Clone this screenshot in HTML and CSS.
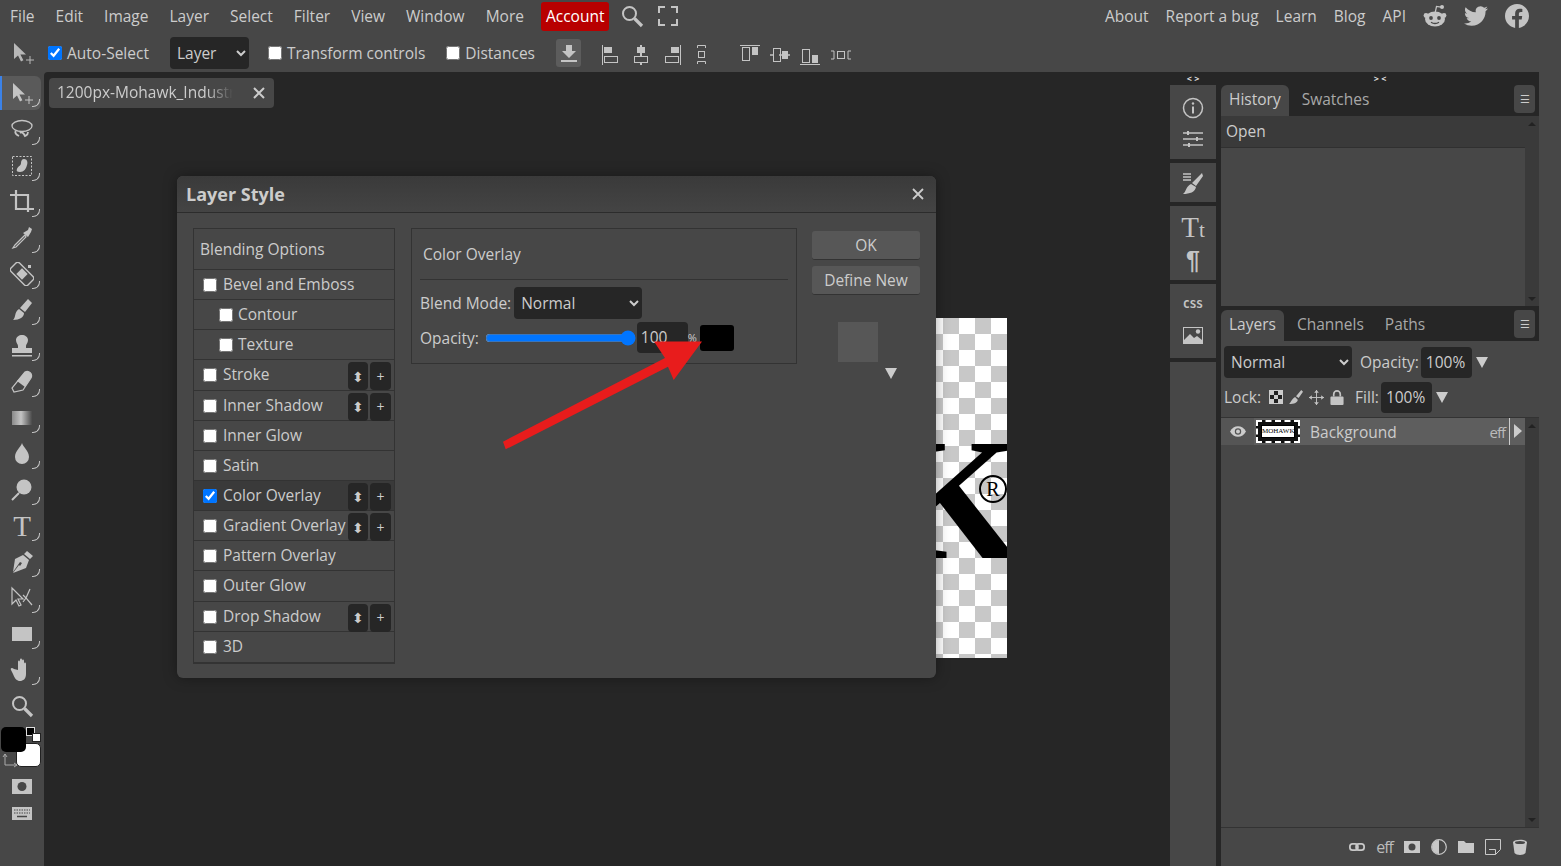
FILE: index.html
```html
<!DOCTYPE html>
<html lang="en">
<head>
    <meta charset="UTF-8">
    <meta name="viewport" content="width=device-width, initial-scale=1.0">
    <title>Photopea</title>
    <link rel="stylesheet" href="styles.css">
</head>
<body>
    <div class="menubar">
        <a>File</a><a>Edit</a><a>Image</a><a>Layer</a><a>Select</a><a>Filter</a><a>View</a><a>Window</a><a>More</a>
        <a class="account">Account</a>
        <svg class="ic search" viewBox="0 0 24 24" width="24" height="24"><circle cx="9.5" cy="9.5" r="6.5" fill="none" stroke="currentColor" stroke-width="2"/><path d="M14.5 14.5L22 22" stroke="currentColor" stroke-width="3.2"/></svg>
        <svg class="ic full" viewBox="0 0 20 20" width="20" height="20"><path d="M1 7V1h6M13 1h6v6M19 13v6h-6M7 19H1v-6" fill="none" stroke="currentColor" stroke-width="2"/></svg>
        <div class="menu-right">
            <a>About</a><a>Report a bug</a><a>Learn</a><a>Blog</a><a>API</a>
            <svg class="ic" viewBox="0 0 24 24" width="24" height="24"><ellipse cx="12" cy="15" rx="10" ry="7.5" fill="currentColor"/><circle cx="3" cy="11.5" r="2.4" fill="currentColor"/><circle cx="21" cy="11.5" r="2.4" fill="currentColor"/><circle cx="19" cy="3" r="2" fill="currentColor"/><path d="M12.3 8L13.5 2.5L18 3.2" fill="none" stroke="currentColor" stroke-width="1.2"/><circle cx="8" cy="14" r="1.9" fill="#474747"/><circle cx="16" cy="14" r="1.9" fill="#474747"/><path d="M8 18.2c2.4 1.6 5.6 1.6 8 0" fill="none" stroke="#474747" stroke-width="1.3"/></svg>
            <svg class="ic" viewBox="0 0 24 24" width="24" height="24"><path fill="currentColor" d="M23.953 4.57a10 10 0 01-2.825.775 4.958 4.958 0 002.163-2.723c-.951.555-2.005.959-3.127 1.184a4.92 4.92 0 00-8.384 4.482C7.69 8.095 4.067 6.13 1.64 3.162a4.822 4.822 0 00-.666 2.475c0 1.71.87 3.213 2.188 4.096a4.904 4.904 0 01-2.228-.616v.06a4.923 4.923 0 003.946 4.827 4.996 4.996 0 01-2.212.085 4.936 4.936 0 004.604 3.417 9.867 9.867 0 01-6.102 2.105c-.39 0-.779-.023-1.17-.067a13.995 13.995 0 007.557 2.209c9.053 0 13.998-7.496 13.998-13.985 0-.21 0-.42-.015-.63A9.935 9.935 0 0024 4.59z"/></svg>
            <svg class="ic" viewBox="0 0 24 24" width="24" height="24"><path fill="currentColor" d="M24 12.073c0-6.627-5.373-12-12-12s-12 5.373-12 12c0 5.99 4.388 10.954 10.125 11.854v-8.385H7.078v-3.47h3.047V9.43c0-3.007 1.792-4.669 4.533-4.669 1.312 0 2.686.235 2.686.235v2.953H15.83c-1.491 0-1.956.925-1.956 1.874v2.25h3.328l-.532 3.47h-2.796v8.385C19.612 23.027 24 18.062 24 12.073z"/></svg>
        </div>
    </div>

    <div class="optionsbar">
        <svg class="ic move" viewBox="0 0 24 24" width="24" height="24"><path d="M3 2v16l4-3.500 3 6 2.400-1.200-3-5.800H15z" fill="currentColor"/><path d="M15 19h8M19 15v8" stroke="currentColor" stroke-width="1"/></svg>
        <input type="checkbox" class="opt-auto" checked>
        <label class="opt-label">Auto-Select</label>
        <select class="dark-select opt-select"><option>Layer</option></select>
        <input type="checkbox" class="opt-tc">
        <label class="opt-label">Transform controls</label>
        <input type="checkbox" class="opt-dist">
        <label class="opt-label">Distances</label>
        <div class="apply-btn">
            <svg viewBox="0 0 20 20" width="20" height="20"><path d="M7 2h6v6h4l-7 7-7-7h4zM2 17h16v2H2z" fill="currentColor"/></svg>
        </div>
        <div class="align-group first">
            <svg viewBox="0 0 18 22" width="18" height="22"><path d="M2.500 1v20" stroke="currentColor"/><rect x="4" y="3" width="8" height="6" fill="currentColor"/><rect x="4.500" y="12.500" width="13" height="6" fill="none" stroke="currentColor"/></svg>
            <svg viewBox="0 0 18 22" width="18" height="22"><path d="M9 1v2M9 19v2M9 9v3" stroke="currentColor" stroke-width="2"/><rect x="5" y="3" width="8" height="6" fill="currentColor"/><rect x="2.500" y="12.500" width="13" height="6" fill="none" stroke="currentColor"/></svg>
            <svg viewBox="0 0 18 22" width="18" height="22"><path d="M16.500 1v20" stroke="currentColor"/><rect x="7" y="3" width="8" height="6" fill="currentColor"/><rect x="1.500" y="12.500" width="13" height="6" fill="none" stroke="currentColor"/></svg>
            <svg viewBox="0 0 12 22" width="12" height="22"><path d="M1.500 4V1.500h8V4M1.500 20v-2.500h8V20" fill="none" stroke="currentColor"/><rect x="2.500" y="7.500" width="6" height="6" fill="none" stroke="currentColor"/></svg>
        </div>
        <div class="align-group second">
            <svg viewBox="0 0 20 22" width="20" height="22"><path d="M0 1.500h20" stroke="currentColor"/><rect x="2.500" y="3.500" width="7" height="13" fill="none" stroke="currentColor"/><rect x="12" y="3" width="6" height="8" fill="currentColor"/></svg>
            <svg viewBox="0 0 20 22" width="20" height="22"><path d="M0 11h3M9 11h3M18 11h2" stroke="currentColor" stroke-width="1.500"/><rect x="3.500" y="4.500" width="7" height="13" fill="none" stroke="currentColor"/><rect x="12" y="7" width="6" height="8" fill="currentColor"/></svg>
            <svg viewBox="0 0 20 22" width="20" height="22"><path d="M0 20.500h20" stroke="currentColor"/><rect x="2.500" y="5.500" width="7" height="13" fill="none" stroke="currentColor"/><rect x="12" y="11" width="6" height="8" fill="currentColor"/></svg>
            <svg viewBox="0 0 22 22" width="22" height="22"><path d="M1 7h3v8H1M21 7h-3v8h3" fill="none" stroke="currentColor"/><rect x="7.500" y="7.500" width="7" height="7" fill="none" stroke="currentColor"/></svg>
        </div>
    </div>

    <div class="main">
        <div class="toolbar">
            <div class="tool active"><svg viewBox="0 0 24 24" width="24" height="24"><path d="M3 2v16l4-3.500 3 6 2.400-1.200-3-5.800H15z" fill="currentColor"/><path d="M15 19h8M19 15v8" stroke="currentColor"/></svg></div>
            <div class="tool"><svg viewBox="0 0 24 24" width="24" height="24"><ellipse cx="12" cy="8" rx="10" ry="5.500" fill="none" stroke="currentColor" stroke-width="1.300"/><path d="M6 13c-2 2 1 4 3 5M10 15c2-2 4 1 5 3 2-1 3-1 3-4" fill="none" stroke="currentColor" stroke-width="1.800"/></svg></div>
            <div class="tool"><svg viewBox="0 0 24 24" width="24" height="24"><rect x="2.500" y="2.500" width="19" height="19" fill="none" stroke="currentColor" stroke-dasharray="2 1.500"/><path d="M14 5c3 0 4 3 3 6-1 4-3 7-7 7-3 0-4-1-3-3 1-3 4-3 4-6 0-2 1-4 3-4z" fill="currentColor"/></svg></div>
            <div class="tool"><svg viewBox="0 0 24 24" width="24" height="24"><path d="M0 5h18v17M6 0v19h18" fill="none" stroke="currentColor" stroke-width="2.200"/></svg></div>
            <div class="tool"><svg viewBox="0 0 24 24" width="24" height="24"><path d="M15 9L5 19l-2 3 3-1L16 11z" fill="none" stroke="currentColor" stroke-width="1.200"/><path d="M13 7l5-3 1-3 3 2-1 3-3 5z" fill="currentColor"/></svg></div>
            <div class="tool"><svg viewBox="0 0 24 24" width="24" height="24"><g transform="rotate(-45 12 12)"><rect x="6" y="0" width="12" height="24" rx="2.500" fill="none" stroke="currentColor" stroke-width="1.400"/><rect x="8" y="8" width="8" height="8" fill="currentColor"/></g><path d="M18 3h3v3h-3z" fill="currentColor"/></svg></div>
            <div class="tool"><svg viewBox="0 0 24 24" width="24" height="24"><path d="M18 1l4 4-7 9-5-4zM9 11l5 4c0 4-4 7-11 7 3-2 1-8 6-11z" fill="currentColor"/></svg></div>
            <div class="tool"><svg viewBox="0 0 24 24" width="24" height="24"><path d="M8 12c0-2-2-3-2-6 0-3 3-5 6-5s6 2 6 5c0 3-2 4-2 6v2h6v5H2v-5h6zM2 21h20v1.500H2z" fill="currentColor"/></svg></div>
            <div class="tool"><svg viewBox="0 0 24 24" width="24" height="24"><path d="M15 2c4-2 8 2 6 6L13 20l-9 2 -2-4z" fill="none" stroke="currentColor" stroke-width="1.200"/><path d="M15 2c4-2 8 2 6 6l-6 9-8-6z" fill="currentColor"/></svg></div>
            <div class="tool"><div class="gradient-ico"></div></div>
            <div class="tool"><svg viewBox="0 0 24 24" width="24" height="24"><path d="M12 1c1 4 7 8 7 14a7 7 0 01-14 0c0-6 6-10 7-14z" fill="currentColor"/></svg></div>
            <div class="tool"><svg viewBox="0 0 24 24" width="24" height="24"><circle cx="14" cy="9" r="7.500" fill="currentColor"/><path d="M9 15L2 22" stroke="currentColor" stroke-width="2"/></svg></div>
            <div class="tool"><span class="type-ico">T</span></div>
            <div class="tool"><svg viewBox="0 0 24 24" width="24" height="24"><path d="M17 1l6 5-3 3-6-5zM13 5l6 5-3 8-13 5 6-8 1 1 2-3-2-1-7 10 2-13z" fill="currentColor"/></svg></div>
            <div class="tool"><svg viewBox="0 0 24 24" width="24" height="24"><path d="M2 2v16l4-4 3 6 2-1-3-6h5z" fill="none" stroke="currentColor" stroke-width="1.200"/><path d="M20 3l-4 9 6 7M16 12l-3-3M16 12l-3 4" fill="none" stroke="currentColor" stroke-width="1.200"/></svg></div>
            <div class="tool"><svg viewBox="0 0 24 24" width="24" height="24"><rect x="2" y="5" width="20" height="14" fill="currentColor"/></svg></div>
            <div class="tool"><svg viewBox="0 0 24 24" width="24" height="24"><path d="M8 12V4c0-2 2-2 2 0v6-8c0-2 2-2 2 0v8-7c0-2 2-2 2 0v8-5c0-2 2-2 2 0v10c0 5-3 7-6 7s-5-2-7-7l-2-4c-1-2 1-3 3-1z" fill="currentColor"/></svg></div>
            <div class="tool plain"><svg viewBox="0 0 24 24" width="24" height="24"><circle cx="9.500" cy="9.500" r="6.500" fill="none" stroke="currentColor" stroke-width="2"/><path d="M14.500 14.500L22 22" stroke="currentColor" stroke-width="3.200"/></svg></div>
            <div class="colors">
                <div class="color-fg"></div>
                <div class="color-bg"></div>
                <div class="mini-black"></div>
                <div class="mini-white"></div>
                <svg class="swap" viewBox="0 0 16 16" width="16" height="16"><path d="M3 1v11h12M1 4l2-3 2 3M12 10l3 2-3 2" fill="none" stroke="currentColor"/></svg>
            </div>
            <div class="tool-small"><svg viewBox="0 0 20 16" width="20" height="16"><rect width="20" height="15" fill="currentColor"/><circle cx="10" cy="7.500" r="4.500" fill="#474747"/></svg></div>
            <div class="tool-small"><svg viewBox="0 0 20 14" width="20" height="14"><rect width="20" height="13" fill="currentColor"/><path d="M2 3h16M2 6h16" stroke="#474747" stroke-dasharray="1.500 1"/><path d="M5 9.500h10" stroke="#474747" stroke-width="1.500"/></svg></div>
        </div>

        <div class="workspace">
            <div class="doc-tab">
                <span class="doc-name">1200px-Mohawk_Industries</span>
                <svg viewBox="0 0 12 12" width="12" height="12"><path d="M1 1l10 10M11 1L1 11" stroke="currentColor" stroke-width="2"/></svg>
            </div>

            <div class="canvas-image">
                <span class="logo-k">K</span>
                <span class="logo-r">R</span>
            </div>

            <div class="dialog">
                <div class="dialog-head">
                    <span>Layer Style</span>
                    <svg viewBox="0 0 12 12" width="12" height="12"><path d="M1 1l10 10M11 1L1 11" stroke="currentColor" stroke-width="1.800"/></svg>
                </div>
                <div class="dialog-body">
                    <div class="style-list">
                        <div class="style-row blending">Blending Options</div>
                        <div class="style-row"><input type="checkbox"><span>Bevel and Emboss</span></div>
                        <div class="style-row sub"><input type="checkbox"><span>Contour</span></div>
                        <div class="style-row sub"><input type="checkbox"><span>Texture</span></div>
                        <div class="style-row"><input type="checkbox"><span>Stroke</span><div class="row-btns"><b>⬍</b><b>+</b></div></div>
                        <div class="style-row"><input type="checkbox"><span>Inner Shadow</span><div class="row-btns"><b>⬍</b><b>+</b></div></div>
                        <div class="style-row"><input type="checkbox"><span>Inner Glow</span></div>
                        <div class="style-row"><input type="checkbox"><span>Satin</span></div>
                        <div class="style-row selected"><input type="checkbox" checked><span>Color Overlay</span><div class="row-btns"><b>⬍</b><b>+</b></div></div>
                        <div class="style-row"><input type="checkbox"><span>Gradient Overlay</span><div class="row-btns"><b>⬍</b><b>+</b></div></div>
                        <div class="style-row"><input type="checkbox"><span>Pattern Overlay</span></div>
                        <div class="style-row"><input type="checkbox"><span>Outer Glow</span></div>
                        <div class="style-row"><input type="checkbox"><span>Drop Shadow</span><div class="row-btns"><b>⬍</b><b>+</b></div></div>
                        <div class="style-row"><input type="checkbox"><span>3D</span></div>
                    </div>

                    <div class="overlay-box">
                        <div class="overlay-title">Color Overlay</div>
                        <div class="overlay-line">
                            <label>Blend Mode:</label>
                            <select class="dark-select blend-select"><option>Normal</option></select>
                        </div>
                        <div class="overlay-line opacity-line">
                            <label>Opacity:</label>
                            <input type="range" class="opacity-range" value="100">
                            <div class="num-box">100</div>
                            <span class="pct">%</span>
                            <div class="swatch"></div>
                        </div>
                    </div>

                    <div class="dialog-side">
                        <div class="btn">OK</div>
                        <div class="btn">Define New</div>
                        <div class="preview"></div>
                        <div class="tri preview-tri"></div>
                    </div>
                </div>
            </div>

            <svg class="arrow" viewBox="0 0 220 120" width="220" height="120"><path d="M3 111.700L165 28 154 11.600 202 11.600 173.700 50 168 36.700 5.700 119.300z" fill="#e81c1c"/></svg>
        </div>

        <div class="dock">
            <div class="dock-top">&lt; &gt;</div>
            <div class="dock-group">
                <svg viewBox="0 0 22 22" width="22" height="22"><circle cx="11" cy="11" r="9.500" fill="none" stroke="currentColor" stroke-width="1.500"/><path d="M11 9.500v7" stroke="currentColor" stroke-width="2"/><circle cx="11" cy="6.500" r="1.200" fill="currentColor"/></svg>
                <svg viewBox="0 0 22 18" width="22" height="18"><path d="M1 3h20M1 9h20M1 15h20" stroke="currentColor" stroke-width="1.500"/><path d="M6 1v4M15 7v4M7 13v4" stroke="currentColor" stroke-width="2"/></svg>
            </div>
            <div class="dock-group">
                <svg viewBox="0 0 22 24" width="22" height="24"><path d="M1 3h8M1 6h8M1 9h8" stroke="currentColor" stroke-width="1.300"/><path d="M20 2l1 3-7 10-4-3zM9 13l5 3c-1 5-6 7-13 7 3-2 3-8 8-10z" fill="currentColor"/></svg>
            </div>
            <div class="dock-group">
                <span class="dock-tt">T<small>t</small></span>
                <span class="dock-para">¶</span>
            </div>
            <div class="dock-group">
                <span class="dock-css">CSS</span>
                <svg viewBox="0 0 20 17" width="20" height="17"><rect width="20" height="17" fill="currentColor"/><path d="M1 1h18v12l-5-4-3 2-4-4-6 6z" fill="#474747"/><circle cx="15" cy="4.500" r="2.200" fill="currentColor"/></svg>
            </div>
            <div class="dock-group dock-rest"></div>
        </div>

        <div class="panels">
            <div class="panels-top">&gt; &lt;</div>
            <div class="panel-tabs">
                <div class="ptab active">History</div>
                <div class="ptab">Swatches</div>
                <div class="pmenu">☰</div>
            </div>
            <div class="history">
                <div class="history-main">
                    <div class="history-row">Open</div>
                    <div class="history-empty"></div>
                </div>
                <div class="scrollstrip"><i class="up"></i><i class="down"></i></div>
            </div>
            <div class="panel-tabs second-tabs">
                <div class="ptab active">Layers</div>
                <div class="ptab">Channels</div>
                <div class="ptab">Paths</div>
                <div class="pmenu">☰</div>
            </div>
            <div class="layer-controls">
                <div class="lc-row">
                    <select class="dark-select layer-mode"><option>Normal</option></select>
                    <label>Opacity:</label>
                    <div class="num-box wide">100%</div>
                    <div class="tri"></div>
                </div>
                <div class="lc-row second">
                    <label>Lock:</label>
                    <div class="lock-icons">
                        <span class="lock-checker"></span>
                        <svg viewBox="0 0 16 16" width="14" height="14"><path d="M14 0l2 2-5 7-3-2zM7 8l3 3c0 3-4 5-10 5 2-1 3-6 7-8z" fill="currentColor"/></svg>
                        <svg viewBox="0 0 16 16" width="15" height="15"><path d="M8 0v16M0 8h16" stroke="currentColor"/><path d="M8 0l2.500 3h-5zM8 16l2.500-3h-5zM0 8l3-2.500v5zM16 8l-3-2.500v5z" fill="currentColor"/></svg>
                        <svg viewBox="0 0 14 16" width="14" height="15"><path d="M3.500 7V4.500a3.500 3.500 0 017 0V7" fill="none" stroke="currentColor" stroke-width="1.800"/><rect y="7" width="14" height="9" rx="1" fill="currentColor"/></svg>
                    </div>
                    <label class="fill-label">Fill:</label>
                    <div class="num-box wide">100%</div>
                    <div class="tri"></div>
                </div>
            </div>
            <div class="layer-area">
                <div class="layer-list">
                    <div class="layer-row">
                        <div class="eye"><svg viewBox="0 0 18 12" width="16" height="11"><path d="M0 6c4-8 14-8 18 0-4 8-14 8-18 0z" fill="currentColor"/><circle cx="9" cy="6" r="3.600" fill="#555"/><circle cx="9" cy="6" r="2.200" fill="currentColor"/></svg></div>
                        <div class="thumb"><div class="thumb-logo">MOHAWK</div></div>
                        <span class="layer-name">Background</span>
                        <span class="eff">eff</span>
                        <div class="layer-arrow"></div>
                    </div>
                </div>
                <div class="scrollstrip"><i class="up"></i><i class="down"></i></div>
            </div>
            <div class="layer-foot">
                <svg viewBox="0 0 18 10" width="16" height="10"><rect x="1" y="1.500" width="9" height="7" rx="3" fill="none" stroke="currentColor" stroke-width="2"/><rect x="8" y="1.500" width="9" height="7" rx="3" fill="none" stroke="currentColor" stroke-width="2"/></svg>
                <span class="foot-eff">eff</span>
                <svg viewBox="0 0 16 12" width="16" height="12"><rect width="16" height="12" fill="currentColor"/><circle cx="8" cy="6" r="3.500" fill="#474747"/></svg>
                <svg viewBox="0 0 16 16" width="16" height="16"><circle cx="8" cy="8" r="7.300" fill="none" stroke="currentColor" stroke-width="1.200"/><path d="M8 1a7 7 0 000 14z" fill="currentColor"/></svg>
                <svg viewBox="0 0 16 12" width="16" height="12"><path d="M0 0h6l2 2h8v10H0z" fill="currentColor"/></svg>
                <svg viewBox="0 0 16 16" width="16" height="16"><path d="M.500.500h15v10l-5 5h-10zM4 10.500h6.500v5" fill="none" stroke="currentColor"/></svg>
                <svg viewBox="0 0 16 16" width="16" height="16"><path d="M1 3c2-3 12-3 14 0l-1.500 11c-2 2.500-9 2.500-11 0z" fill="currentColor"/><ellipse cx="8" cy="3.500" rx="5" ry="1.500" fill="#474747"/></svg>
            </div>
        </div>
        <div class="edge"></div>
    </div>
</body>
</html>
```

FILE: styles.css
```css
*{
    margin: 0;
    padding: 0;
    box-sizing: border-box;
}

html,body{
    height: 100%;
    overflow: hidden;
}

body{
    display: flex;
    flex-direction: column;
    background-color: #474747;
    color: #ccc;
    font-family: "Open Sans", sans-serif;
    font-size: 15.5px;
}

input[type=checkbox]{
    width: 14px;
    height: 14px;
    flex: none;
}

.ic{
    display: block;
    color: #c4c4c4;
    flex: none;
}

/* top menu */
.menubar{
    height: 33px;
    display: flex;
    align-items: center;
    gap: 21px;
    padding: 0 0 2px 10px;
    flex: none;
}

.account{
    background-color: #b80000;
    color: #fff;
    height: 29px;
    line-height: 28px;
    padding: 0 5px;
    border-radius: 3px;
    margin: 2px 0 0 -4px;
}

.search{
    margin-left: -10px;
}

.full{
    margin-left: -7px;
}

.menu-right{
    margin-left: auto;
    display: flex;
    align-items: center;
    gap: 17px;
    padding-right: 32px;
}

/* options */
.optionsbar{
    height: 39px;
    display: flex;
    align-items: center;
    flex: none;
    color: #ccc;
}

.move{
    margin-left: 11px;
    color: #b8b8b8;
}

.opt-auto{
    margin-left: 13px;
}

.opt-label{
    margin-left: 5px;
}

.dark-select{
    background-color: #262626;
    color: #ccc;
    border: none;
    border-radius: 4px;
    font-family: "Open Sans", sans-serif;
    font-size: 15.5px;
    height: 32px;
    padding-left: 3px;
}

.opt-select{
    width: 79px;
    margin-left: 21px;
}

.opt-tc{
    margin-left: 19px;
}

.opt-dist{
    margin-left: 21px;
}

.apply-btn{
    width: 25px;
    height: 28px;
    margin-left: 21px;
    background-color: #5c5c5c;
    border-radius: 3px;
    display: flex;
    align-items: center;
    justify-content: center;
    color: #c4c4c4;
}

.align-group{
    display: flex;
    align-items: center;
    color: #c4c4c4;
    margin-top: 4px;
}

.align-group.first{
    margin-left: 19px;
    gap: 14px;
}

.align-group.second{
    margin-left: 32px;
    gap: 10px;
}

/* main area */
.main{
    flex: 1;
    display: flex;
    min-height: 0;
}

.toolbar{
    width: 44px;
    flex: none;
    background-color: #474747;
    padding-top: 4px;
    color: #c4c4c4;
}

.tool{
    height: 36px;
    display: flex;
    align-items: center;
    justify-content: center;
    position: relative;
}

.tool.active{
    background-color: #5a5a5a;
    border-left: 2px solid #3b82e8;
    border-radius: 0 6px 6px 0;
    width: 41px;
    height: 34px;
    margin-bottom: 2px;
}

.tool::after{
    content: "";
    position: absolute;
    right: 4px;
    bottom: 3px;
    width: 7px;
    height: 7px;
    border-right: 1px solid #c4c4c4;
    border-bottom: 1px solid #c4c4c4;
    border-bottom-right-radius: 7px;
}

.tool.active::after{
    right: 1px;
}

.tool.plain::after{
    display: none;
}

.gradient-ico{
    width: 20px;
    height: 14px;
    background: linear-gradient(to right, #8a8a8a, #c4c4c4 45%, #4a4a4a);
}

.type-ico{
    font-family: "Liberation Serif", serif;
    font-size: 29px;
    line-height: 1;
    color: #c4c4c4;
}

.colors{
    position: relative;
    height: 41px;
    margin-top: 3px;
}

.color-fg{
    position: absolute;
    left: 1px;
    top: 0;
    width: 25px;
    height: 25px;
    background-color: #000;
    border-radius: 5px;
    z-index: 2;
}

.color-bg{
    position: absolute;
    left: 16px;
    top: 16px;
    width: 25px;
    height: 24px;
    background-color: #fff;
    border: 1px solid #222;
    border-radius: 5px;
}

.mini-black{
    position: absolute;
    left: 26px;
    top: 0;
    width: 9px;
    height: 9px;
    background-color: #000;
    border: 1px solid #ddd;
}

.mini-white{
    position: absolute;
    left: 32px;
    top: 6px;
    width: 9px;
    height: 9px;
    background-color: #fff;
    border: 1px solid #222;
}

.swap{
    position: absolute;
    left: 2px;
    top: 26px;
    color: #aaa;
}

.tool-small{
    height: 27px;
    display: flex;
    align-items: center;
    justify-content: center;
    color: #c4c4c4;
}

.colors + .tool-small{
    margin-top: 5px;
}

/* workspace */
.workspace{
    flex: 1;
    position: relative;
    background-color: #262626;
    border-top-left-radius: 4px;
    padding: 6px 0 0 5px;
}

.doc-tab{
    width: 225px;
    height: 30px;
    background-color: #474747;
    border-radius: 4px;
    display: flex;
    align-items: center;
    padding-left: 8px;
    color: #ccc;
}

.doc-name{
    width: 176px;
    margin-top: -3px;
    white-space: nowrap;
    overflow: hidden;
    -webkit-mask-image: linear-gradient(to right, #000 85%, transparent);
    mask-image: linear-gradient(to right, #000 85%, transparent);
}

.doc-tab svg{
    margin-left: 20px;
}

.canvas-image{
    position: absolute;
    left: 556px;
    top: 246px;
    width: 407px;
    height: 340px;
    overflow: hidden;
    background-color: #fff;
    background-image: conic-gradient(#c8c8c8 25%, #fff 0 50%, #c8c8c8 0 75%, #fff 0);
    background-size: 32px 32px;
    background-position: 7px 0;
}

.logo-k{
    position: absolute;
    right: -14px;
    top: 95px;
    font-family: "Liberation Serif", serif;
    font-weight: bold;
    font-size: 174px;
    line-height: 174px;
    color: #000;
}

.logo-r{
    position: absolute;
    right: 0;
    top: 157px;
    width: 28px;
    height: 28px;
    border: 2px solid #000;
    border-radius: 50%;
    font-family: "Liberation Serif", serif;
    font-size: 20px;
    line-height: 25px;
    text-align: center;
    color: #000;
}

/* layer style dialog */
.dialog{
    position: absolute;
    left: 133px;
    top: 104px;
    width: 759px;
    height: 502px;
    background-color: #474747;
    border-radius: 6px;
    box-shadow: 0 0 14px rgba(0,0,0,.35);
    display: flex;
    flex-direction: column;
}

.dialog-head{
    height: 37px;
    flex: none;
    display: flex;
    align-items: center;
    justify-content: space-between;
    padding: 0 12px 0 9px;
    background: linear-gradient(#3a3a3a, #444);
    border-bottom: 1px solid #2c2c2c;
    border-radius: 6px 6px 0 0;
    font-size: 18px;
    font-weight: 700;
    color: #ccc;
}

.dialog-body{
    display: flex;
    padding: 15px 16px;
    align-items: flex-start;
}

.style-list{
    width: 202px;
    flex: none;
    border: 1px solid #333;
    border-width: 1px 1px 2px 1px;
}

.style-row{
    height: 30.15px;
    display: flex;
    align-items: center;
    gap: 6px;
    padding-left: 9px;
    border-bottom: 1px solid #333;
    position: relative;
    white-space: nowrap;
}

.style-row input{
    margin-top: 1px;
}

.style-row span{
    margin-top: -1px;
}

.style-row:last-child{
    border-bottom: none;
}

.style-row.blending{
    height: 41px;
    padding-left: 6px;
}

.style-row.sub{
    padding-left: 25px;
    gap: 5px;
}

.style-row.selected{
    background-color: #3a3a3a;
}

.row-btns{
    position: absolute;
    right: 3px;
    top: 2px;
    display: flex;
    gap: 2px;
}

.row-btns b{
    width: 20px;
    height: 28px;
    background-color: #262626;
    border-radius: 4px;
    display: flex;
    align-items: center;
    justify-content: center;
    font-weight: normal;
    font-size: 14px;
    color: #ccc;
}

.row-btns b:last-child{
    width: 21px;
}

.overlay-box{
    width: 386px;
    height: 136px;
    flex: none;
    margin-left: 16px;
    border: 1px solid #333;
    padding: 0 8px;
}

.overlay-title{
    height: 51px;
    line-height: 51px;
    padding-left: 3px;
    border-bottom: 1px solid #333;
    margin-bottom: 7px;
}

.overlay-line{
    display: flex;
    align-items: center;
    gap: 3px;
}

.blend-select{
    width: 128px;
}

.opacity-line{
    height: 33px;
    margin-top: 2px;
    gap: 0;
}

.opacity-range{
    width: 151px;
    margin: 0 1px 0 6px;
}

.num-box{
    width: 51px;
    height: 31px;
    line-height: 31px;
    background-color: #262626;
    border-radius: 4px;
    padding-left: 4px;
    color: #ccc;
    flex: none;
}

.pct{
    font-size: 11px;
    width: 12px;
}

.swatch{
    width: 34px;
    height: 26px;
    background-color: #000;
    border-radius: 3px;
}

.dialog-side{
    width: 108px;
    margin-left: 15px;
    padding-top: 3px;
    position: relative;
}

.btn{
    height: 29px;
    line-height: 28px;
    text-align: center;
    background-color: #575757;
    border-bottom: 1px solid #333;
    border-radius: 3px;
    margin-bottom: 6px;
    color: #ccc;
}

.preview{
    width: 40px;
    height: 40px;
    background-color: #575757;
    margin: 27px 0 0 26px;
}

.tri{
    width: 0;
    height: 0;
    border-left: 6px solid transparent;
    border-right: 6px solid transparent;
    border-top: 11px solid #ccc;
    flex: none;
}

.preview-tri{
    margin: 6px 0 0 73px;
}

.arrow{
    position: absolute;
    left: 456px;
    top: 258px;
}

/* dock */
.dock{
    width: 46px;
    flex: none;
    background-color: #262626;
    display: flex;
    flex-direction: column;
    gap: 4px;
    color: #c4c4c4;
}

.dock-top{
    height: 9px;
    text-align: center;
    font-size: 9px;
    line-height: 14px;
    font-weight: bold;
    color: #ddd;
}

.dock-group{
    background-color: #474747;
    display: flex;
    flex-direction: column;
    align-items: center;
    justify-content: space-around;
    padding: 6px 0;
    height: 74px;
}

.dock-group:nth-child(3){
    height: 39px;
}

.dock-rest{
    flex: 1;
}

.dock-tt{
    font-family: "Liberation Serif", serif;
    font-size: 29px;
    line-height: 30px;
}

.dock-tt small{
    font-size: 21px;
}

.dock-para{
    font-family: "Liberation Sans", sans-serif;
    font-size: 25px;
    font-weight: bold;
    line-height: 28px;
}

.dock-css{
    font-family: "DejaVu Sans Mono", monospace;
    font-size: 11px;
    font-weight: bold;
}

/* right panels */
.panels{
    width: 323px;
    flex: none;
    background-color: #262626;
    padding-left: 5px;
    display: flex;
    flex-direction: column;
}

.panels-top{
    height: 13px;
    font-size: 9px;
    line-height: 14px;
    font-weight: bold;
    color: #ddd;
    text-align: center;
}

.panel-tabs{
    height: 31px;
    flex: none;
    display: flex;
    gap: 5px;
    position: relative;
    background-color: #262626;
}

.second-tabs{
    margin-top: 4px;
}

.ptab{
    padding: 0 8px;
    line-height: 29px;
    color: #a8a8a8;
    border-radius: 6px 6px 0 0;
}

.ptab.active{
    background-color: #474747;
    color: #ccc;
}

.pmenu{
    position: absolute;
    right: 4px;
    top: 0;
    width: 21px;
    height: 28px;
    line-height: 27px;
    text-align: center;
    font-size: 11px;
    background-color: #474747;
    border-radius: 4px;
}

.history{
    height: 190px;
    flex: none;
    display: flex;
    background-color: #474747;
}

.history-main{
    flex: 1;
}

.history-row{
    height: 32px;
    line-height: 30px;
    padding-left: 5px;
    background-color: #3a3a3a;
    border-bottom: 1px solid #303030;
}

.scrollstrip{
    width: 14px;
    flex: none;
    background-color: #3a3a3a;
    position: relative;
}

.scrollstrip i{
    position: absolute;
    left: 3px;
    width: 0;
    height: 0;
    border-left: 4px solid transparent;
    border-right: 4px solid transparent;
}

.scrollstrip .up{
    top: 6px;
    border-bottom: 4px solid #222;
}

.scrollstrip .down{
    bottom: 5px;
    border-top: 4px solid #222;
}

.layer-controls{
    height: 77px;
    flex: none;
    background-color: #474747;
    border-bottom: 1px solid #333;
    padding: 5px 0 0 3px;
}

.lc-row{
    display: flex;
    align-items: center;
    height: 32px;
}

.lc-row.second{
    margin-top: 3px;
}

.layer-mode{
    width: 128px;
    margin-right: 8px;
}

.lc-row .num-box{
    margin: 0 4px 0 2px;
    padding-left: 5px;
}

.lock-icons{
    display: flex;
    align-items: center;
    gap: 6px;
    margin-left: 8px;
    color: #c4c4c4;
}

.lock-checker{
    width: 14px;
    height: 14px;
    border: 1px solid #ccc;
    background-image: conic-gradient(#222 25%, #ccc 0 50%, #222 0 75%, #ccc 0);
    background-size: 8px 8px;
}

.fill-label{
    margin-left: 11px;
}

.layer-area{
    flex: 1;
    display: flex;
    min-height: 0;
    background-color: #474747;
    border-bottom: 1px solid #333;
}

.layer-list{
    flex: 1;
}

.layer-row{
    height: 27px;
    display: flex;
    align-items: center;
    background-color: #5e5e5e;
}

.eye{
    width: 33px;
    height: 27px;
    background-color: #555;
    display: flex;
    align-items: center;
    justify-content: center;
    color: #ccc;
}

.thumb{
    width: 44px;
    height: 23px;
    margin-left: 2px;
    padding: 3px;
    border: 2px dashed #fff;
    background-color: #111;
    display: flex;
}

.thumb-logo{
    flex: 1;
    background-color: #fff;
    border: 1px solid #000;
    color: #000;
    font-family: "Liberation Serif", serif;
    font-size: 7px;
    line-height: 11px;
    text-align: center;
    overflow: hidden;
}

.layer-name{
    margin-left: 10px;
    flex: 1;
    color: #ccc;
}

.eff{
    font-size: 15px;
    letter-spacing: -1px;
    color: #bbb;
    margin-right: 4px;
}

.layer-arrow{
    width: 16px;
    height: 27px;
    border-left: 1px solid #ccc;
    position: relative;
}

.layer-arrow::after{
    content: "";
    position: absolute;
    left: 4px;
    top: 6px;
    border-left: 8px solid #ccc;
    border-top: 7px solid transparent;
    border-bottom: 7px solid transparent;
}

.layer-foot{
    height: 38px;
    flex: none;
    background-color: #474747;
    display: flex;
    align-items: center;
    justify-content: flex-end;
    gap: 11px;
    padding-right: 11px;
    color: #c8c8c8;
}

.foot-eff{
    font-size: 16px;
    letter-spacing: -1px;
    color: #bbb;
}

.edge{
    width: 22px;
    flex: none;
    background-color: #474747;
}
```
